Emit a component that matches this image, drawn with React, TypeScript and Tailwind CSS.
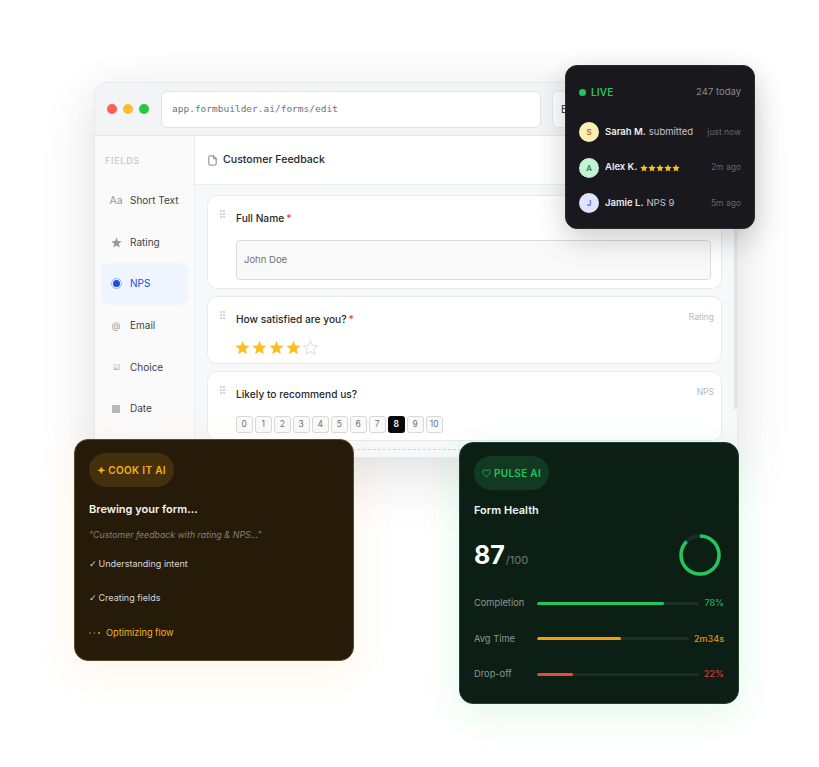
import React from 'react';
import { File } from 'lucide-react';

const FONT = "font-['Inter',sans-serif]";

const FIELDS = [
  { icon: 'Aa', label: 'Short Text', iconClass: 'text-[10.5px] text-[#999]' },
  { icon: 'star', label: 'Rating', iconClass: '' },
  { icon: 'radio', label: 'NPS', iconClass: '' },
  { icon: '@', label: 'Email', iconClass: 'text-[9px] text-[#999]' },
  { icon: '☑', label: 'Choice', iconClass: 'text-[8px] text-[#999]' },
  { icon: 'box', label: 'Date', iconClass: '' },
];

const FEED = [
  { initial: 'S', name: 'Sarah M.', rest: 'submitted', time: 'just now', circle: 'bg-[#fdeeb8] text-[#b45309]' },
  { initial: 'A', name: 'Alex K.', rest: 'stars', time: '2m ago', circle: 'bg-[#c4f2d6] text-[#15803d]' },
  { initial: 'J', name: 'Jamie L.', rest: 'NPS 9', time: '5m ago', circle: 'bg-[#dfe3fd] text-[#4f46e5]' },
];

const METRICS = [
  { label: 'Completion', value: '78%', pct: 78, fill: 'bg-[#22c55e]', text: 'text-[#1fae54]' },
  { label: 'Avg Time', value: '2m34s', pct: 55, fill: 'bg-[#f59e0b]', text: 'text-[#e0920c]' },
  { label: 'Drop-off', value: '22%', pct: 22, fill: 'bg-[#ef4444]', text: 'text-[#d13c3c]' },
];

// sharp five point star, the lucide one has round corners
function SharpStar({ size, className }: { size: number; className: string }) {
  return (
    <svg width={size} height={size} viewBox="0 0 24 24" className={className}>
      <polygon points="12,1 15.1,8.6 23.4,9.3 17.1,14.7 19.1,22.8 12,18.4 4.9,22.8 6.9,14.7 0.6,9.3 8.9,8.6" />
    </svg>
  );
}

function Grip() {
  return (
    <div className="grid grid-cols-[2px_2px] auto-rows-[2px] gap-[1px] self-start mt-[1px] w-[5px] shrink-0 mr-[11px]">
      {[0, 1, 2, 3, 4, 5].map((i) => (
        <span key={i} className="bg-[#d4d4d8]" />
      ))}
    </div>
  );
}

function FormCard({ title, required, tag, height, children }: { title: string; required?: boolean; tag?: string; height: string; children: React.ReactNode }) {
  return (
    <div className={`bg-white rounded-[10px] border border-[#e9eaee] pl-[12px] pr-[10px] pt-[13px] ${height}`}>
      <div className="flex">
        <Grip />
        <div className="flex-1">
          <div className="flex items-center justify-between h-[18px] mt-[1px]">
            <span className="text-[10.2px] font-medium text-[#27272a]">
              {title}
              {required && <span className="text-[#ef4444] ml-[2px]">*</span>}
            </span>
            {tag && <span className="text-[8.5px] text-[#b8b8bd] -mt-[6px] -mr-[3px]">{tag}</span>}
          </div>
          {children}
        </div>
      </div>
    </div>
  );
}

export default function App() {
  return (
    <div className={`relative w-[819px] h-[767px] bg-white overflow-hidden ${FONT}`}>
      <div className="pl-[94px] pt-[82px]">
        {/* Browser window */}
        <div className="w-[644px] h-[376px] rounded-t-[12px] rounded-b-[4px] border border-[#e8e9ec] bg-white overflow-hidden shadow-[0_20px_60px_rgba(0,0,0,0.1),0_0_40px_rgba(0,0,0,0.04)]">
          <div className="h-[53px] bg-[#f3f4f6] border-b border-[#e5e7eb] flex items-center pl-[12px] gap-[6px]">
            <span className="w-[10px] h-[10px] rounded-full bg-[#ff5f57]" />
            <span className="w-[10px] h-[10px] rounded-full bg-[#febc2e]" />
            <span className="w-[10px] h-[10px] rounded-full bg-[#28c840]" />
            <div className="ml-[6px] w-[380px] h-[37px] bg-white rounded-[6px] border border-[#e2e3e7] flex items-center pl-[10px] font-['DejaVu_Sans_Mono',monospace] text-[9.5px] text-[#6b7280]">
              app.formbuilder.ai/forms/edit
            </div>
            <div className="ml-[5px] w-[80px] h-[37px] bg-white rounded-[6px] border border-[#e8e9ec] flex items-center pl-[8px] text-[10px] text-[#27272a]">
              Build
            </div>
          </div>

          <div className="flex h-[322px]">
            <div className="w-[100px] shrink-0 bg-[#fafafa] border-r border-[#ececef] px-[6px] pt-[19px]">
              <div className="text-[9px] font-medium tracking-[0.08em] text-[#c8c8cc] pl-[4px] mb-[13px] h-[12px] leading-[12px]">FIELDS</div>
              <div className="flex flex-col">
                {FIELDS.map((f) => (
                  <div
                    key={f.label}
                    className={`h-[41.6px] rounded-[8px] flex items-center pl-[8px] gap-[7px] text-[10px] ${
                      f.label === 'NPS' ? 'bg-[#eef5ff] text-[#1d4ed8]' : 'text-[#3f3f46]'
                    }`}
                  >
                    <span className={`w-[14px] flex justify-center ${f.iconClass}`}>
                      {f.icon === 'radio' ? (
                        <span className="w-[7px] h-[7px] rounded-full bg-[#1d4ed8] outline outline-[1px] outline-offset-[1px] outline-[#93b4f5]" />
                      ) : f.icon === 'box' ? (
                        <span className="w-[8px] h-[8px] bg-[#b8b8bc]" />
                      ) : f.icon === 'star' ? (
                        <SharpStar size={11} className="fill-[#999]" />
                      ) : (
                        f.icon
                      )}
                    </span>
                    {f.label}
                  </div>
                ))}
              </div>
            </div>

            <div className="flex-1 min-w-0 bg-[#f7f8fa] relative">
              <div className="h-[49px] bg-white border-b border-[#ececef] flex items-center pl-[12px] gap-[5px] text-[10.6px] font-medium text-[#27272a]">
                <File size={11} className="text-[#777]" />
                Customer Feedback
              </div>
              <div className="flex flex-col gap-[7px] pl-[12px] pr-[15px] pt-[10px]">
                <FormCard title="Full Name" required height="h-[94px]">
                  <div className="mt-[12px] h-[40px] rounded-[4px] bg-[#f9f9f9] border border-[#dcdcdf] flex items-center pl-[7px] text-[9.5px] text-[#71717a]">
                    John Doe
                  </div>
                </FormCard>
                <FormCard title="How satisfied are you?" required tag="Rating" height="h-[68px]">
                  <div className="mt-[11px] flex gap-[2px] -ml-[1px]">
                    {[0, 1, 2, 3].map((i) => (
                      <SharpStar key={i} size={15} className="fill-[#fbbf24]" />
                    ))}
                    <SharpStar size={15} className="fill-none stroke-[#d8d8dc] stroke-[1.5]" />
                  </div>
                </FormCard>
                <FormCard title="Likely to recommend us?" tag="NPS" height="h-[70px]">
                  <div className="mt-[12px] flex gap-[2.5px]">
                    {[0, 1, 2, 3, 4, 5, 6, 7, 8, 9, 10].map((n) => (
                      <span
                        key={n}
                        className={`min-w-[16.5px] px-[1px] h-[17px] rounded-[3px] flex items-center justify-center text-[8.5px] ${
                          n === 8 ? 'bg-[#09090b] text-white font-semibold' : 'bg-[#fafafa] border border-[#d8d8dc] text-[#71717a]'
                        }`}
                      >
                        {n}
                      </span>
                    ))}
                  </div>
                </FormCard>
                <div className="h-[1px] mt-[1px] border-t border-dashed border-[#d4d4d8]" />
              </div>
              <div className="absolute right-0 top-0 w-[3px] h-[273px] bg-[#e2e2e4]" />
            </div>
          </div>
        </div>
      </div>

      {/* Live feed */}
      <div className="absolute left-[565px] top-[65px] w-[190px] h-[164px] rounded-[12px] bg-[#18181d] border border-[#2a2a30] shadow-[0_10px_30px_rgba(0,0,0,0.2)] px-[13px] pt-[19px]">
        <div className="flex items-center justify-between h-[14px]">
          <span className="flex items-center gap-[5px] text-[10px] font-semibold text-[#22c55e] tracking-[0.02em]">
            <span className="w-[7px] h-[7px] rounded-full bg-[#22c55e]" />
            LIVE
          </span>
          <span className="text-[9.5px] text-[#8a8a90]">247 today</span>
        </div>
        <div className="flex flex-col gap-[15.5px] mt-[23px]">
          {FEED.map((f) => (
            <div key={f.name} className="flex items-center h-[20px]">
              <span className={`w-[20px] h-[20px] rounded-full flex items-center justify-center text-[8px] font-medium shrink-0 ${f.circle}`}>
                {f.initial}
              </span>
              <span className="ml-[6px] flex-1 flex items-center gap-[3px] text-[9.5px] text-[#c4c4c8] whitespace-nowrap">
                <span className="font-semibold text-[#ececee]">{f.name}</span>
                {f.rest === 'stars' ? (
                  <span className="flex">
                    {[0, 1, 2, 3, 4].map((i) => (
                      <SharpStar key={i} size={8} className="fill-[#fbbf24]" />
                    ))}
                  </span>
                ) : (
                  f.rest
                )}
              </span>
              <span className="text-[8.5px] text-[#66666c] whitespace-nowrap">{f.time}</span>
            </div>
          ))}
        </div>
      </div>

      {/* Cook it AI */}
      <div className="absolute left-[74px] top-[439px] w-[280px] h-[222px] rounded-[14px] bg-[#261a09] border border-[#5a4a2c] shadow-[0_10px_40px_rgba(245,158,11,0.1)] px-[14px] pt-[13px]">
        <div className="inline-flex items-center h-[34px] px-[8px] rounded-full bg-[#44300c] text-[#f5b50f] text-[10px] font-semibold tracking-[0.035em]">
          ✦ COOK IT AI
        </div>
        <div className="mt-[14px] text-[11px] font-semibold text-[#f4f4f5] h-[16px] leading-[16px]">Brewing your form...</div>
        <div className="mt-[12px] text-[8.8px] italic text-[#85807a] h-[12px] leading-[12px]">"Customer feedback with rating &amp; NPS..."</div>
        <div className="mt-[17px] text-[9px] text-[#d8d8d8] h-[12px] leading-[12px]">
          <span className="font-['DejaVu_Sans',sans-serif] mr-[2px]">✓</span>Understanding intent
        </div>
        <div className="mt-[22px] text-[9px] text-[#d8d8d8] h-[12px] leading-[12px]">
          <span className="font-['DejaVu_Sans',sans-serif] mr-[2px]">✓</span>Creating fields
        </div>
        <div className="mt-[23px] flex items-center gap-[4px] text-[9.2px] text-[#f5b50f] h-[12px] leading-[12px]">
          <span className="flex gap-[3px] w-[13px]">
            <span className="w-[1.5px] h-[1.5px] rounded-full bg-[#8a6a14]" />
            <span className="w-[1.5px] h-[1.5px] rounded-full bg-[#a37d14]" />
            <span className="w-[2px] h-[2px] rounded-full bg-[#d9a20f]" />
          </span>
          Optimizing flow
        </div>
      </div>

      {/* Pulse AI */}
      <div className="absolute left-[459px] top-[442px] w-[280px] h-[262px] rounded-[14px] bg-[#0c1f15] border border-[#21402e] shadow-[0_10px_40px_rgba(34,197,94,0.12)] px-[14px] pt-[13px]">
        <div className="inline-flex items-center gap-[3px] h-[34px] px-[8px] rounded-full bg-[#123a22] text-[#22c55e] text-[10px] font-semibold tracking-[0.03em]">
          <svg width="9" height="9" viewBox="0 0 24 24" fill="none" stroke="currentColor" strokeWidth="2">
            <path d="M12 21 C5 15 2 12 2 8 a5 5 0 0 1 10 -2 a5 5 0 0 1 10 2 C22 12 19 15 12 21Z" />
          </svg>
          PULSE AI
        </div>
        <div className="mt-[12px] text-[11px] font-semibold text-[#f4f4f5] h-[16px] leading-[16px]">Form Health</div>
        <div className="flex items-center justify-between mt-[15px] pr-[2px]">
          <div className="flex items-baseline">
            <span className="text-[25px] font-bold text-white leading-[44px]">87</span>
            <span className="text-[11px] text-[#6f7a74] ml-[1px]">/100</span>
          </div>
          <svg width="44" height="44" viewBox="0 0 44 44" className="-rotate-90">
            <circle cx="22" cy="22" r="19" fill="none" stroke="#1d2f25" strokeWidth="3.5" />
            <circle cx="22" cy="22" r="19" fill="none" stroke="#22c55e" strokeWidth="3.5" strokeDasharray="103.9 119.4" />
          </svg>
        </div>
        <div className="flex flex-col gap-[21.5px] mt-[19px]">
          {METRICS.map((m) => (
            <div key={m.label} className="flex items-center h-[14px] text-[9.3px]">
              <span className="w-[63px] shrink-0 text-[#8b9690]">{m.label}</span>
              <div className="flex-1 h-[3px] rounded-full bg-[#1d2f25] overflow-hidden">
                <div className={`h-full rounded-full ${m.fill}`} style={{ width: `${m.pct}%` }} />
              </div>
              <span className={`ml-[5px] text-[9px] font-medium ${m.text}`}>{m.value}</span>
            </div>
          ))}
        </div>
      </div>
    </div>
  );
}
